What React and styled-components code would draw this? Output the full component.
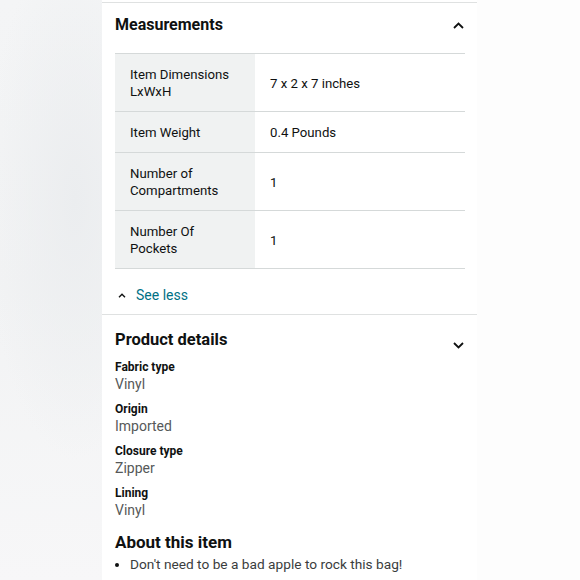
import React from "react";
import styled, { createGlobalStyle } from "styled-components";

const Global = createGlobalStyle`
  html, body {
    margin: 0;
    padding: 0;
    background: #fdfdfd;
  }
  body {
    font-family: Roboto, "Liberation Sans", sans-serif;
    color: #0f1111;
  }
`;

const Page = styled.div`
  display: flex;
  width: 580px;
  height: 580px;
  overflow: hidden;
`;

const LeftGutter = styled.div`
  width: 102px;
  flex-shrink: 0;
  background:
    radial-gradient(ellipse 90px 260px at 75px 200px, #ebedef 0%, rgba(235,237,239,0) 100%),
    linear-gradient(to bottom, #f4f5f6, #f2f3f4 50%, #f7f7f8);
`;

const RightGutter = styled.div`
  flex: 1;
  background: #fdfdfd;
`;

const Panel = styled.div`
  width: 375px;
  flex-shrink: 0;
  background: #fff;
  padding-top: 2px;
`;

const Section = styled.section`
  border-top: 1px solid #dfe1e1;
  padding: 0 13px;
`;

const Header = styled.div`
  display: flex;
  align-items: ${(p) => (p.$top ? "flex-start" : "center")};
  justify-content: space-between;
  box-sizing: border-box;
  height: ${(p) => p.$h}px;
  padding: ${(p) => p.$pad};
`;

const Title = styled.h2`
  margin: 0;
  font-size: ${(p) => p.$size || 17}px;
  font-weight: 700;
  line-height: 22px;
  color: #0f1111;
`;

const Chevron = styled.svg`
  width: 11px;
  height: 7px;
  margin-top: ${(p) => p.$mt || 0}px;
  flex-shrink: 0;
`;

const Table = styled.div`
  width: 350px;
  border-top: 1px solid #d5d9d9;
`;

const Row = styled.div`
  display: grid;
  grid-template-columns: 140px 1fr;
  border-bottom: 1px solid #d5d9d9;
`;

const Cell = styled.div`
  padding: 12px 15px 11px;
  font-size: 13.2px;
  line-height: 17px;
  color: #0f1111;
  display: flex;
  align-items: center;
  background: ${(p) => (p.$head ? "#f0f2f2" : "#fff")};
`;

const SeeLess = styled.div`
  display: flex;
  align-items: center;
  gap: 10px;
  height: 45px;
  padding-left: 3px;
  padding-top: 7px;
  box-sizing: border-box;
  color: #007185;
  font-size: 14px;
`;

const SmallChevron = styled.svg`
  width: 8px;
  height: 5px;
`;

const Details = styled.div`
  display: flex;
  flex-direction: column;
  gap: 8px;
  padding-top: 8px;
`;

const Detail = styled.div`
  display: flex;
  flex-direction: column;
`;

const Label = styled.div`
  font-size: 12px;
  font-weight: 700;
  line-height: 17px;
  color: #0f1111;
`;

const Value = styled.div`
  font-size: 14px;
  line-height: 17px;
  color: #565959;
`;

const About = styled.div`
  padding-top: 12px;
`;

const Bullets = styled.ul`
  margin: 1px 0 0;
  padding: 0 0 0 15px;
  font-size: 13.7px;
  line-height: 20px;
  color: #3a3d3d;
  li::marker {
    color: #0f1111;
    font-size: 13px;
  }
`;

const rows = [
  ["Item Dimensions LxWxH", "7 x 2 x 7 inches"],
  ["Item Weight", "0.4 Pounds"],
  ["Number of Compartments", "1"],
  ["Number Of Pockets", "1"],
];

const details = [
  ["Fabric type", "Vinyl"],
  ["Origin", "Imported"],
  ["Closure type", "Zipper"],
  ["Lining", "Vinyl"],
];

export default function App() {
  return (
    <Page>
      <Global />
      <LeftGutter />
      <Panel>
        <Section>
          <Header $h={50} $pad="0 0 6px 0">
            <Title $size={16}>Measurements</Title>
            <Chevron viewBox="0 0 11 7">
              <polyline points="1,6 5.5,1.5 10,6" fill="none" stroke="#0f1111" strokeWidth="1.8" />
            </Chevron>
          </Header>
          <Table>
            {rows.map(([k, v]) => (
              <Row key={k}>
                <Cell $head>{k}</Cell>
                <Cell>{v}</Cell>
              </Row>
            ))}
          </Table>
          <SeeLess>
            <SmallChevron viewBox="0 0 8 5">
              <polyline points="1,4.2 4,1.2 7,4.2" fill="none" stroke="#0f1111" strokeWidth="1.4" />
            </SmallChevron>
            See less
          </SeeLess>
        </Section>
        <Section>
          <Header $h={36} $top $pad="14px 0 0 0">
            <Title $size={16.5}>Product details</Title>
            <Chevron viewBox="0 0 11 7" $mt={13}>
              <polyline points="1,1 5.5,5.5 10,1" fill="none" stroke="#0f1111" strokeWidth="1.8" />
            </Chevron>
          </Header>
          <Details>
            {details.map(([k, v]) => (
              <Detail key={k}>
                <Label>{k}</Label>
                <Value>{v}</Value>
              </Detail>
            ))}
          </Details>
          <About>
            <Title $size={17}>About this item</Title>
            <Bullets>
              <li>Don't need to be a bad apple to rock this bag!</li>
            </Bullets>
          </About>
        </Section>
      </Panel>
      <RightGutter />
    </Page>
  );
}
